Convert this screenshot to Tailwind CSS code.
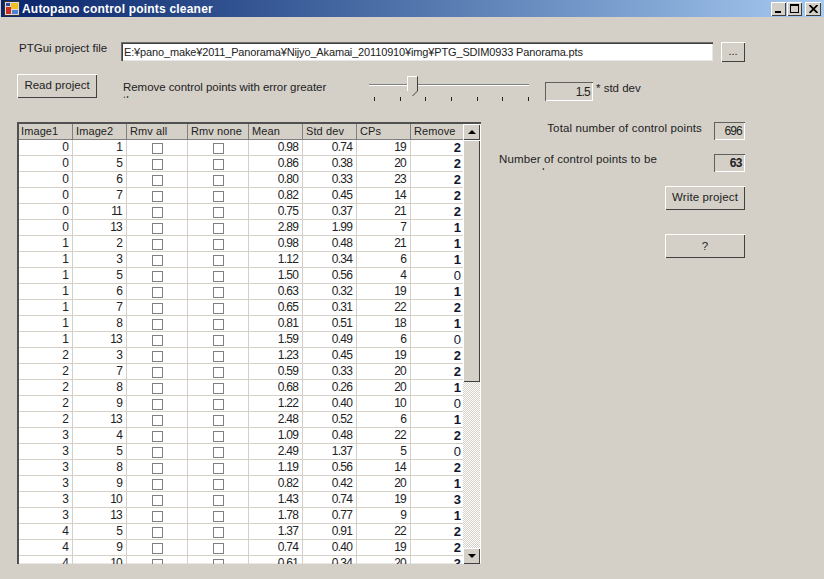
<!DOCTYPE html>
<html lang="en">
<head>
    <meta charset="UTF-8">
    <title>Autopano control points cleaner</title>
    <script src="https://cdn.jsdelivr.net/npm/@tailwindcss/browser@4"></script>
</head>
<body class="w-[824px] h-[579px] overflow-hidden bg-[#d4d0c8] text-[#222] text-[11px] leading-[14px] font-['Liberation_Sans','Noto_Sans_CJK_JP',sans-serif]">

    <!-- title bar -->
    <div class="h-[17px] ml-[1px] flex items-center bg-gradient-to-r from-[#0a246a] to-[#a6caf0]">
        <svg class="w-[16px] h-[15px] ml-[3px]" viewBox="0 0 16 15">
            <rect x="0.5" y="0.5" width="15" height="14" fill="#d8d8e8" stroke="#333"/>
            <rect x="2" y="6" width="5" height="7" fill="#c83020"/>
            <rect x="7" y="2" width="7" height="6" fill="#f0c020"/>
            <rect x="8" y="9" width="6" height="4" fill="#5080d0"/>
            <rect x="2" y="2" width="4" height="3" fill="#304890"/>
        </svg>
        <span class="ml-[2px] text-white font-bold text-[12px] tracking-[0.2px]">Autopano control points cleaner</span>
        <div class="ml-auto mr-[3px] flex">
            <div class="w-[15px] h-[14px] bg-[#d4d0c8] shadow-[inset_1px_1px_0_#fff,inset_-1px_-1px_0_#404040] relative">
                <div class="absolute left-[4px] bottom-[3px] w-[6px] h-[2px] bg-black"></div>
            </div>
            <div class="w-[15px] h-[14px] ml-[1px] bg-[#d4d0c8] shadow-[inset_1px_1px_0_#fff,inset_-1px_-1px_0_#404040] flex items-center justify-center">
                <div class="w-[9px] h-[9px] border border-black border-t-2"></div>
            </div>
            <div class="w-[16px] h-[14px] ml-[3px] bg-[#d4d0c8] shadow-[inset_1px_1px_0_#fff,inset_-1px_-1px_0_#404040] flex items-center justify-center">
                <svg class="w-[9px] h-[8px]" viewBox="0 0 9 8"><path d="M0.5 0 L8.5 8 M8.5 0 L0.5 8" stroke="#000" stroke-width="1.8"/></svg>
            </div>
        </div>
    </div>

    <!-- project file row -->
    <div class="flex mt-[25px] ml-[19px] h-[20px]">
        <div class="w-[102px] text-[11.5px] mt-[-1px]">PTGui project file</div>
        <div class="w-[592px] h-[19px] pl-[3px] flex items-center bg-white text-[11px] tracking-[-0.15px] whitespace-nowrap overflow-hidden shadow-[inset_1px_1px_0_#6e6e6e,inset_2px_2px_0_#404040,inset_-1px_-1px_0_#e8e8e8]">E:¥pano_make¥2011_Panorama¥Nijyo_Akamai_20110910¥img¥PTG_SDIM0933 Panorama.pts</div>
        <button class="w-[24px] h-[20px] ml-[8px] pb-[2px] bg-[#d4d0c8] shadow-[inset_1px_1px_0_#fff,inset_-1px_-1px_0_#404040]">...</button>
    </div>

    <!-- threshold row -->
    <div class="flex mt-[12px] ml-[17px] h-[30px]">
        <button class="w-[80px] h-[24px] pb-[3px] text-[11.5px] bg-[#d4d0c8] shadow-[inset_1px_1px_0_#fff,inset_-1px_-1px_0_#404040]">Read project</button>
        <div class="w-[216px] h-[17px] ml-[26px] mt-[7px] overflow-hidden text-[11.5px] leading-[13px] tracking-[-0.05px]">Remove control points with error greater than</div>
        <div class="w-[176px] ml-[30px] h-[30px] relative">
            <div class="absolute left-0 top-[10px] w-[160px] h-[2px] bg-[#808080] border-b border-white"></div>
            <svg class="absolute left-[38px] top-[2px] w-[11px] h-[21px]" viewBox="0 0 11 21">
                <path d="M0.5 0.5 H10.5 V15 L5.5 20 L0.5 15 Z" fill="#d4d0c8"/>
                <path d="M0.5 15 V0.5 H10" fill="none" stroke="#fff"/>
                <path d="M10.5 0.5 V15 L5.5 20" fill="none" stroke="#404040"/>
            </svg>
            <div class="absolute left-[5px] right-[16px] top-[23px] flex justify-between">
                <i class="w-px h-[4px] bg-[#222]"></i><i class="w-px h-[4px] bg-[#222]"></i><i class="w-px h-[4px] bg-[#222]"></i><i class="w-px h-[4px] bg-[#222]"></i><i class="w-px h-[4px] bg-[#222]"></i><i class="w-px h-[4px] bg-[#222]"></i><i class="w-px h-[4px] bg-[#222]"></i>
            </div>
        </div>
        <div class="w-[48px] h-[19px] mt-[8px] pr-[3px] flex items-center justify-end text-[12px] tracking-[-0.8px] shadow-[inset_1px_1px_0_#606060,inset_-1px_-1px_0_#fff]">1.5</div>
        <div class="ml-[3px] mt-[7px] text-[11.5px] whitespace-nowrap">* std dev</div>
    </div>

    <!-- grid and right panel -->
    <div class="flex mt-[18px] ml-[17px]">
        <div class="flex w-[464px] h-[442px] overflow-hidden bg-white border-l-2 border-t-2 border-[#505050] shadow-[inset_0_-1px_0_#e8e8e8]">
            <div class="w-[444px] h-[440px] overflow-hidden">
                <table class="table-fixed border-separate border-spacing-0 w-[444px]">
                    <colgroup>
                        <col class="w-[54px]"><col class="w-[54px]"><col class="w-[61px]"><col class="w-[61px]"><col class="w-[54px]"><col class="w-[54px]"><col class="w-[54px]"><col class="w-[52px]">
                    </colgroup>
                    <thead>
                        <tr class="h-[16px] bg-[#d4d0c8] text-left text-[11px] tracking-[0.1px]">
                            <th class="font-normal pl-[2px] pb-[1px] border-r border-b border-[#808080]">Image1</th>
                            <th class="font-normal pl-[3px] pb-[1px] border-r border-b border-[#808080]">Image2</th>
                            <th class="font-normal pl-[3px] pb-[1px] border-r border-b border-[#808080]">Rmv all</th>
                            <th class="font-normal pl-[3px] pb-[1px] border-r border-b border-[#808080]">Rmv none</th>
                            <th class="font-normal pl-[3px] pb-[1px] border-r border-b border-[#808080]">Mean</th>
                            <th class="font-normal pl-[3px] pb-[1px] border-r border-b border-[#808080]">Std dev</th>
                            <th class="font-normal pl-[3px] pb-[1px] border-r border-b border-[#808080]">CPs</th>
                            <th class="font-normal pl-[3px] pb-[1px] border-b border-[#808080]">Remove</th>
                        </tr>
                    </thead>
                    <tbody id="rows"></tbody>
                </table>
            </div>
            <!-- scrollbar -->
            <div class="w-[17px] h-[440px] flex flex-col bg-[repeating-conic-gradient(#ffffff_0_25%,#d4d0c8_0_50%)] bg-[length:2px_2px]">
                <div class="h-[16px] flex items-center justify-center bg-[#d4d0c8] shadow-[inset_1px_1px_0_#fff,inset_-1px_-1px_0_#404040]">
                    <div class="w-0 h-0 border-x-[4px] border-x-transparent border-b-[4px] border-b-black"></div>
                </div>
                <div class="h-[242px] bg-[#d4d0c8] shadow-[inset_1px_1px_0_#fff,inset_-1px_-1px_0_#404040]"></div>
                <div class="h-[16px] mt-auto flex items-center justify-center bg-[#d4d0c8] shadow-[inset_1px_1px_0_#fff,inset_-1px_-1px_0_#404040]">
                    <div class="w-0 h-0 border-x-[4px] border-x-transparent border-t-[4px] border-t-black"></div>
                </div>
            </div>
        </div>

        <div class="w-[264px] text-[11.5px] tracking-[0.13px]">
            <div class="flex justify-end h-[18px]">
                <div class="mt-[-1px] mr-[12px] whitespace-nowrap">Total number of control points</div>
                <div class="w-[31px] h-[18px] pr-[3px] flex items-center justify-end text-[12px] tracking-[-0.8px] shadow-[inset_1px_1px_0_#606060,inset_-1px_-1px_0_#fff]">696</div>
            </div>
            <div class="flex h-[18px] mt-[14px]">
                <div class="w-[172px] ml-[18px] mr-[43px] h-[17px] overflow-hidden leading-[13px] mt-[-1px]">Number of control points to be removed</div>
                <div class="w-[31px] h-[18px] pr-[3px] flex items-center justify-end font-bold text-[12px] tracking-[-0.5px] shadow-[inset_1px_1px_0_#606060,inset_-1px_-1px_0_#fff]">63</div>
            </div>
            <div class="flex flex-col items-end mt-[14px]">
                <button class="w-[80px] h-[24px] pb-[2px] bg-[#d4d0c8] shadow-[inset_1px_1px_0_#fff,inset_-1px_-1px_0_#404040]">Write project</button>
                <button class="w-[80px] h-[24px] mt-[24px] bg-[#d4d0c8] shadow-[inset_1px_1px_0_#fff,inset_-1px_-1px_0_#404040]">?</button>
            </div>
        </div>
    </div>

    <script>
        const data = [
            [0,1,'0.98','0.74',19,2],[0,5,'0.86','0.38',20,2],[0,6,'0.80','0.33',23,2],[0,7,'0.82','0.45',14,2],
            [0,11,'0.75','0.37',21,2],[0,13,'2.89','1.99',7,1],[1,2,'0.98','0.48',21,1],[1,3,'1.12','0.34',6,1],
            [1,5,'1.50','0.56',4,0],[1,6,'0.63','0.32',19,1],[1,7,'0.65','0.31',22,2],[1,8,'0.81','0.51',18,1],
            [1,13,'1.59','0.49',6,0],[2,3,'1.23','0.45',19,2],[2,7,'0.59','0.33',20,2],[2,8,'0.68','0.26',20,1],
            [2,9,'1.22','0.40',10,0],[2,13,'2.48','0.52',6,1],[3,4,'1.09','0.48',22,2],[3,5,'2.49','1.37',5,0],
            [3,8,'1.19','0.56',14,2],[3,9,'0.82','0.42',20,1],[3,10,'1.43','0.74',19,3],[3,13,'1.78','0.77',9,1],
            [4,5,'1.37','0.91',22,2],[4,9,'0.74','0.40',19,2],[4,10,'0.61','0.34',20,3]
        ];
        const num = 'text-right pr-[4px] pb-[2px] text-[12px] leading-[12px] tracking-[-0.8px] border-r border-b border-[#d4d0c8]';
        const box = '<td class="pt-[1px] border-r border-b border-[#d4d0c8]"><div class="w-[11px] h-[11px] mx-auto border border-[#808080]"></div></td>';
        document.getElementById('rows').innerHTML = data.map(r => `
            <tr class="h-[16px]">
                <td class="${num}">${r[0]}</td><td class="${num}">${r[1]}</td>${box}${box}
                <td class="${num}">${r[2]}</td><td class="${num}">${r[3]}</td><td class="${num}">${r[4]}</td>
                <td class="text-right pr-[2px] text-[13px] leading-[13px] text-[#101830] border-b border-[#d4d0c8] ${r[5] ? 'font-bold' : 'font-normal'}">${r[5]}</td>
            </tr>`).join('');
    </script>

</body>
</html>
